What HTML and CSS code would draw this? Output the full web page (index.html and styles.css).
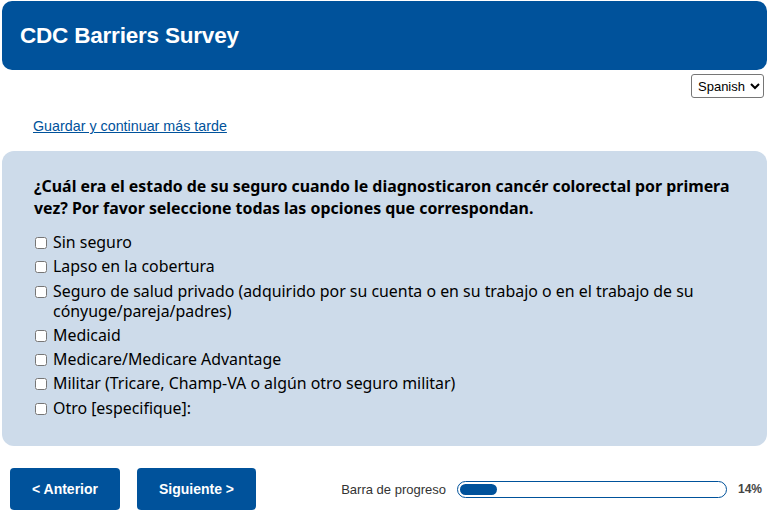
FILE: index.html
```html
<!DOCTYPE html>
<html lang="es">
<head>
<meta charset="utf-8">
<title>CDC Barriers Survey</title>
<link rel="stylesheet" href="styles.css">
</head>
<body>
<div class="page">
  <header class="site-header">
    <h1 class="site-title">CDC Barriers Survey</h1>
  </header>
  <div class="lang-row">
    <select class="lang-select">
      <option>Spanish</option>
    </select>
  </div>
  <div class="save-row">
    <a class="save-link" href="#">Guardar y continuar más tarde</a>
  </div>
  <section class="question-panel">
    <h2 class="question">¿Cuál era el estado de su seguro cuando le diagnosticaron cancér colorectal por primera vez? Por favor seleccione todas las opciones que correspondan.</h2>
    <ul class="options">
      <li class="option"><input type="checkbox" class="cb"><span>Sin seguro</span></li>
      <li class="option"><input type="checkbox" class="cb"><span>Lapso en la cobertura</span></li>
      <li class="option"><input type="checkbox" class="cb"><span>Seguro de salud privado (adquirido por su cuenta o en su trabajo o en el trabajo de su cónyuge/pareja/padres)</span></li>
      <li class="option"><input type="checkbox" class="cb"><span>Medicaid</span></li>
      <li class="option"><input type="checkbox" class="cb"><span>Medicare/Medicare Advantage</span></li>
      <li class="option"><input type="checkbox" class="cb"><span>Militar (Tricare, Champ-VA o algún otro seguro militar)</span></li>
      <li class="option"><input type="checkbox" class="cb"><span>Otro [especifique]:</span></li>
    </ul>
  </section>
  <footer class="nav-row">
    <button class="nav-btn btn-prev">&lt; Anterior</button>
    <button class="nav-btn btn-next">Siguiente &gt;</button>
    <div class="progress">
      <span class="progress-label">Barra de progreso</span>
      <div class="progress-track"><div class="progress-fill" style="width:14%"></div></div>
      <span class="progress-pct">14%</span>
    </div>
  </footer>
</div>
</body>
</html>
```
FILE: styles.css
```css
* { box-sizing: border-box; }
html, body { margin: 0; padding: 0; background: #fff; }
body { font-family: "Liberation Sans", Arial, sans-serif; color: #000; }
.page { padding: 1px 2px 0 2px; }

.site-header {
  background: #00529b;
  border-radius: 10px;
  height: 69px;
  display: flex;
  align-items: center;
  padding: 0 18px;
}
.site-title {
  margin: 0;
  color: #fff;
  font-family: "Liberation Sans", Arial, sans-serif;
  font-weight: bold;
  font-size: 22.5px;
  letter-spacing: -0.2px;
}

.lang-row {
  display: flex;
  justify-content: flex-end;
  padding: 4px 3px 0 0;
}
.lang-select {
  height: 24px;
  width: 73px;
  font-family: "Liberation Sans", Arial, sans-serif;
  font-size: 13px;
  color: #000;
  background: #fff;
  border: 1px solid #767676;
  border-radius: 3px;
  padding: 0 2px;
}

.save-row { padding: 19px 0 0 31px; height: 53px; }
.save-link {
  font-family: "Liberation Sans", Arial, sans-serif;
  font-size: 14.3px;
  color: #00529b;
  text-decoration: underline;
}

.question-panel {
  background: #cddbea;
  border-radius: 12px;
  height: 295px;
  padding: 24px 32px 0 32px;
}
.question {
  margin: 0 0 13px 0;
  font-family: "Noto Sans", "Open Sans", sans-serif;
  font-weight: bold;
  font-size: 15.9px;
  line-height: 22px;
  color: #000;
}
.options {
  list-style: none;
  margin: 0;
  padding: 0;
  font-family: "Noto Sans", "Open Sans", sans-serif;
  font-size: 15.9px;
  line-height: 20px;
  color: #000;
}
.option {
  display: flex;
  align-items: flex-start;
  margin-bottom: 4.3px;
}
.cb {
  width: 12px;
  height: 12px;
  margin: 5px 6px 0 1px;
  flex: none;
}

.nav-row {
  display: flex;
  align-items: center;
  padding: 22px 5px 0 8px;
}
.nav-btn {
  height: 42px;
  background: #00529b;
  color: #fff;
  border: none;
  border-radius: 4px;
  font-family: "Liberation Sans", Arial, sans-serif;
  font-weight: bold;
  font-size: 14px;
  padding: 0;
}
.btn-prev { width: 110px; }
.btn-next { width: 119px; margin-left: 17px; }

.progress {
  margin-left: auto;
  display: flex;
  align-items: center;
}
.progress-label {
  font-size: 13px;
  color: #333;
  margin-right: 11px;
}
.progress-track {
  width: 270px;
  height: 17px;
  border: 1.5px solid #00529b;
  border-radius: 9px;
  padding: 2px;
  background: #fff;
}
.progress-fill {
  height: 100%;
  background: #00529b;
  border-radius: 6px;
}
.progress-pct {
  margin-left: 11px;
  font-size: 12px;
  font-weight: bold;
  color: #444;
}
```
